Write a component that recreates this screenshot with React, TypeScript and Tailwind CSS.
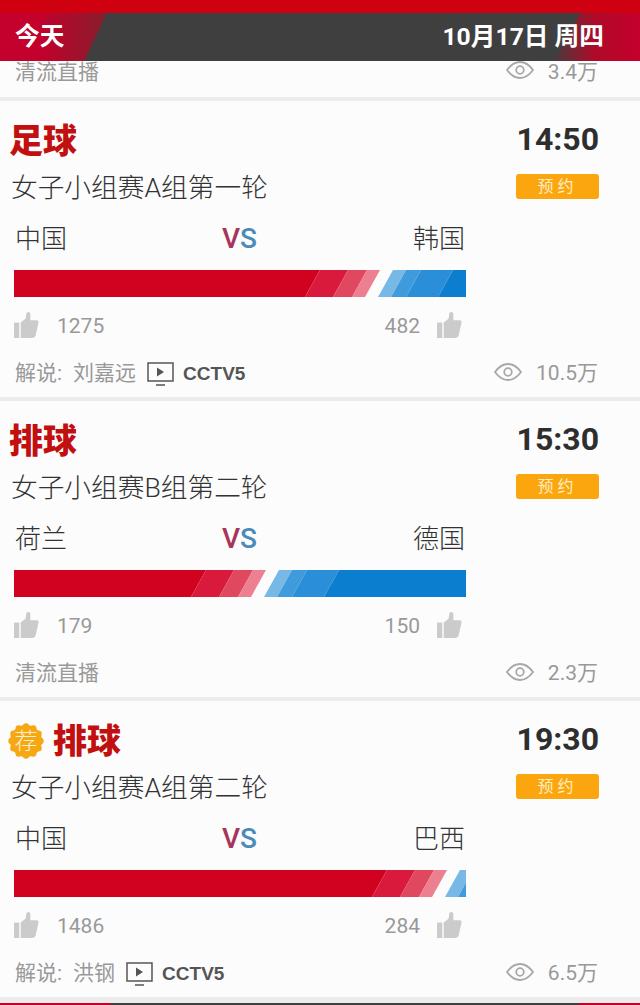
import type { ReactNode } from 'react'

type Match = {
  sport: string
  time: string
  round: string
  home: string
  away: string
  homeLikes: number
  awayLikes: number
  split: number
  commentator?: string
  views: string
  featured?: boolean
}

const matches: Match[] = [
  { sport: '足球', time: '14:50', round: '女子小组赛A组第一轮', home: '中国', away: '韩国', homeLikes: 1275, awayLikes: 482, split: 366, commentator: '刘嘉远', views: '10.5万' },
  { sport: '排球', time: '15:30', round: '女子小组赛B组第二轮', home: '荷兰', away: '德国', homeLikes: 179, awayLikes: 150, split: 252, views: '2.3万' },
  { sport: '排球', time: '19:30', round: '女子小组赛A组第二轮', home: '中国', away: '巴西', homeLikes: 1486, awayLikes: 284, split: 433, commentator: '洪钢', views: '6.5万', featured: true },
]

function Slant({ from, to, fill }: { from: number; to: number; fill: string }) {
  return <polygon points={`${from},0 ${to},0 ${to - 15},27 ${from - 15},27`} fill={fill} />
}

// Stripes fade out towards the gap between the two sides
function VoteBar({ split }: { split: number }) {
  const blue = split + 13
  return (
    <svg width="452" height="27" viewBox="0 0 452 27" className="block">
      <Slant from={-20} to={split - 60} fill="#d0021f" />
      <Slant from={split - 60} to={split - 32} fill="#d91a3c" />
      <Slant from={split - 32} to={split - 13} fill="#e0485f" />
      <Slant from={split - 13} to={split} fill="#ec7f90" />
      <Slant from={blue} to={blue + 13} fill="#78b8e6" />
      <Slant from={blue + 13} to={blue + 28} fill="#3f9bdc" />
      <Slant from={blue + 28} to={blue + 60} fill="#2b8ed8" />
      <Slant from={blue + 60} to={480} fill="#0b7ed0" />
    </svg>
  )
}

function Thumb() {
  return (
    <svg width="25" height="27" viewBox="0 0 26 28" className="shrink-0">
      <rect x="0" y="12" width="5.5" height="16" fill="#cbcbcb" />
      <path d="M7 12 12 8 13 2Q15 0 17 2.500L17 9.500 24 9.500Q26 10 25.500 12L22.500 25.500Q22 28 19 28L7 28Z" fill="#cbcbcb" />
    </svg>
  )
}

function Eye() {
  return (
    <svg width="28" height="18" viewBox="0 0 28 18" fill="none" stroke="#a8a8a8" strokeWidth="1.800" className="shrink-0 -mt-[5px]">
      <path d="M1 9C5 3.500 9.500 1 14 1s9 2.500 13 8c-4 5.500-8.500 8-13 8S5 14.500 1 9Z" />
      <circle cx="14" cy="9" r="3.800" />
    </svg>
  )
}

function Screen() {
  return (
    <svg width="27" height="24" viewBox="0 0 27 24" fill="none" stroke="#555" strokeWidth="1.500" className="shrink-0">
      <rect x="1" y="1" width="25" height="18" />
      <path d="M10 5.500 17 10 10 14.500Z" fill="#555" stroke="none" />
      <path d="M9 23H18" />
    </svg>
  )
}

function FeaturedBadge() {
  const scallops = Array.from({ length: 12 }, (_, i) => (i * Math.PI) / 6)
  return (
    <div className="relative -ml-[1px] flex h-[36px] w-[36px] items-center justify-center">
      <svg width="36" height="36" viewBox="0 0 36 36" className="absolute inset-0">
        <circle cx="18" cy="18" r="16" fill="#f5a714" />
        {scallops.map((a, i) => (
          <circle key={i} cx={18 + 14.500 * Math.cos(a)} cy={18 + 14.500 * Math.sin(a)} r="3.200" fill="#f5a714" />
        ))}
      </svg>
      <span className="relative text-[23px] font-light leading-none text-[#fff0cc]">荐</span>
    </div>
  )
}

function Views({ value }: { value: string }) {
  return (
    <div className="flex items-center gap-[14px] text-[21px] text-[#999]">
      <Eye />
      <span>{value}</span>
    </div>
  )
}

function Divider() {
  return <div className="h-[4px] bg-[#ececec]" />
}

function MatchCard({ match }: { match: Match }) {
  return (
    <section className="h-[296px] bg-[#fcfcfd] pt-[17px]">
      <div className="flex justify-between pl-[9px] pr-[41px]">
        <div className="flex h-[46px] items-center gap-[9px]">
          {match.featured && <FeaturedBadge />}
          <h2 className="text-[34px] font-black leading-none text-[#c20f0f]">{match.sport}</h2>
        </div>
        <div className="flex flex-col items-end">
          <span className="flex h-[42px] items-center text-[32px] font-bold text-[#2e2e2e]">{match.time}</span>
          <button className="mt-[14px] -mb-[41px] flex h-[25px] w-[83px] items-center justify-center rounded-[3px] bg-[#fba60f] text-[16px] leading-none tracking-[4px] text-[#ffeec4]">
            预约
          </button>
        </div>
      </div>
      <p className="flex h-[48px] items-center pl-[11px] pt-[1px] text-[26.700px] font-light text-[#333]">{match.round}</p>
      <div className="ml-[14px] w-[452px]">
        <div className="flex h-[50px] items-center justify-between px-[1px] pt-[4px] text-[26px] font-light text-[#333]">
          <span>{match.home}</span>
          <span className="-ml-[1px] text-[28px] font-medium">
            <span className="text-[#a8345a]">V</span>
            <span className="text-[#4a8bb9]">S</span>
          </span>
          <span>{match.away}</span>
        </div>
        <div className="mt-[8px]">
          <VoteBar split={match.split} />
        </div>
        <div className="flex h-[55px] items-center justify-between pr-[4px] text-[21px] text-[#999]">
          <div className="flex items-center gap-[18px]">
            <Thumb />
            <span className="mt-[5px]">{match.homeLikes}</span>
          </div>
          <div className="flex items-center gap-[17px]">
            <span className="mt-[5px]">{match.awayLikes}</span>
            <Thumb />
          </div>
        </div>
      </div>
      <div className="flex h-[40px] items-center justify-between pl-[15px] pr-[42px] pt-[4px]">
        <Footer commentator={match.commentator} />
        <Views value={match.views} />
      </div>
    </section>
  )
}

function Footer({ commentator }: { commentator?: string }): ReactNode {
  if (!commentator) return <span className="text-[21px] text-[#999]">清流直播</span>
  return (
    <div className="flex items-center text-[21px] text-[#999]">
      <span>解说:</span>
      <span className="ml-[11px]">{commentator}</span>
      <span className="ml-[11px]">
        <Screen />
      </span>
      <span className="ml-[9px] font-['Liberation_Sans',sans-serif] text-[19px] font-bold text-[#555]">CCTV5</span>
    </div>
  )
}

function DayHeader() {
  return (
    <header className="relative h-[61px] bg-[#cf0010]">
      <div className="absolute inset-x-0 top-[13px] h-[48px] bg-[linear-gradient(90deg,#c4002c_0%,#c4002c_6%,#8a1c2c_16%,#3f3f3f_17%,#3f3f3f_86%,#b00a28_93%,#c4002c_100%)]" />
      <div className="absolute inset-x-0 top-[13px] h-[48px] bg-[#3f3f3f] [clip-path:polygon(107px_0,580px_0,555px_48px,84px_48px)]" />
      <div className="absolute inset-x-0 top-[13px] flex h-[48px] items-center justify-between pl-[15px] pr-[36px] text-[24.700px] font-bold text-white">
        <span>今天</span>
        <span>10月17日 周四</span>
      </div>
    </header>
  )
}

export default function App() {
  return (
    <div className="h-[1005px] w-[640px] overflow-hidden bg-[#fcfcfd] font-[Roboto,'Noto_Sans_CJK_SC',sans-serif]">
      <DayHeader />
      <div className="flex h-[36px] items-start justify-between pl-[15px] pr-[42px] text-[21px] leading-[23px] text-[#999]">
        <span>清流直播</span>
        <div className="flex items-center gap-[14px]">
          <Eye />
          <span>3.4万</span>
        </div>
      </div>
      <Divider />
      {matches.map((m, i) => (
        <div key={i}>
          <MatchCard match={m} />
          <Divider />
        </div>
      ))}
      <div className="h-[2px] bg-[#ececec]" />
      <div className="h-[3px] bg-[linear-gradient(90deg,#c4002c_0%,#c4002c_17%,#3f3f3f_17.500%,#3f3f3f_90%,#c4002c_91%)]" />
    </div>
  )
}
